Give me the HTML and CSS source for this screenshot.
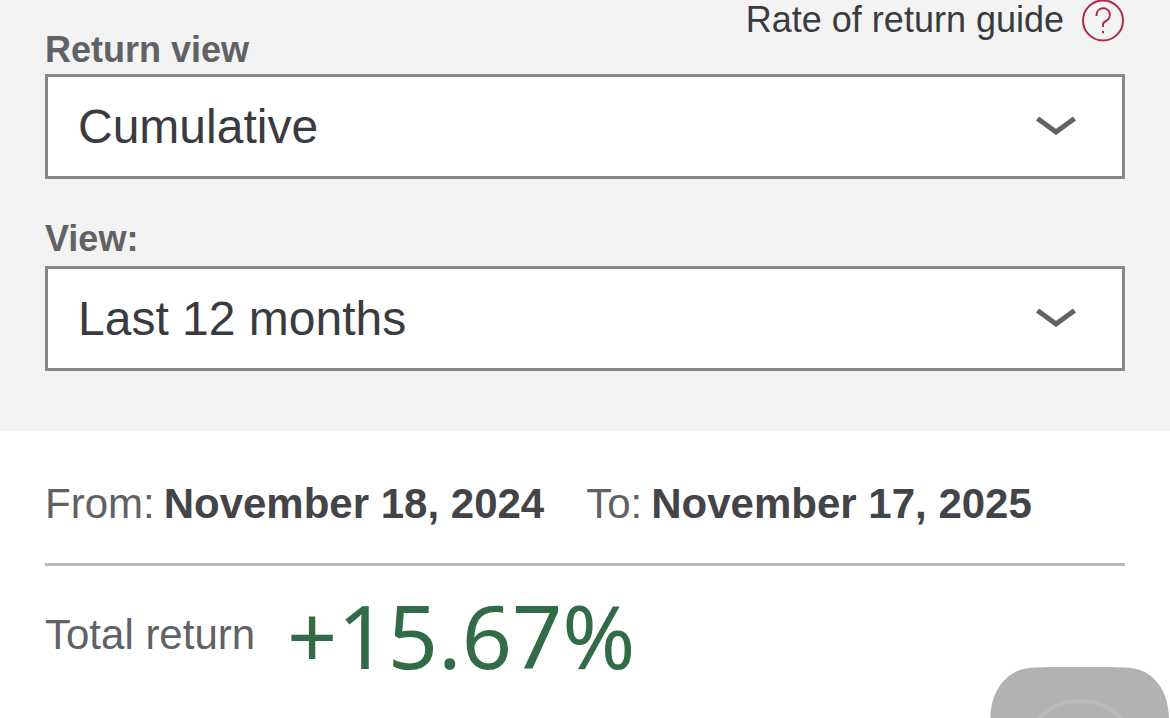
FILE: index.html
```
<!DOCTYPE html>
<html lang="en">

<head>
    <meta charset="UTF-8">
    <meta name="viewport" content="width=device-width, initial-scale=1.0">
    <title>Rate of return</title>
    <link rel="stylesheet" href="styles.css">
</head>

<body>
    <form class="filters">
        <div class="filters-top">
            <label for="return-view">Return view</label>
            <a class="guide" href="#guide">
                Rate of return guide
                <svg class="help" viewBox="0 0 42 42" aria-hidden="true">
                    <circle cx="21" cy="20.500" r="20" />
                    <path d="M14.500 16v-1a6.700 6.700 0 1 1 9.500 6c-2 .9-3 1.800-3 3.500v2.500" />
                    <path d="M21 31v2.200" />
                </svg>
            </a>
        </div>
        <div class="select">
            <select id="return-view">
                <option>Cumulative</option>
                <option>Annualized</option>
            </select>
            <svg class="arrow" viewBox="0 0 40 18" aria-hidden="true">
                <path d="M1.500 1.500l18.500 13.500 18.500-13.500" />
            </svg>
        </div>

        <label class="view-label" for="period">View:</label>
        <div class="select">
            <select id="period">
                <option>Last 12 months</option>
                <option>Year to date</option>
            </select>
            <svg class="arrow" viewBox="0 0 40 18" aria-hidden="true">
                <path d="M1.500 1.500l18.500 13.500 18.500-13.500" />
            </svg>
        </div>
    </form>

    <main class="result">
        <div class="dates">
            <p>From: <strong>November 18, 2024</strong></p>
            <p>To: <strong>November 17, 2025</strong></p>
        </div>
        <div class="total">
            <span>Total return</span>
            <span class="percent">+15.67%</span>
        </div>
    </main>

    <!-- floating button, partly below the fold -->
    <button class="floating" type="button" aria-label="Menu">
        <svg viewBox="0 0 180 180" aria-hidden="true">
            <path class="tile" d="M0.500 52C0.500 24 16 5 36 1.500Q44 0 60 0H118Q136 0 144 1.500C164 5 179 24 179 52V180H0.500z" />
            <circle class="ring" cx="90" cy="90" r="56" />
        </svg>
    </button>
</body>

</html>
```
FILE: styles.css
```
* {
    margin: 0;
    padding: 0;
    box-sizing: border-box;
}

body {
    font-family: "Liberation Sans", Arial, sans-serif;
    font-size: 42px;
    color: #616265;
    background-color: #fff;
}

.filters {
    padding: 0 45px 60px;
    background-color: #f3f3f3;
}

.filters-top {
    display: flex;
    justify-content: space-between;
    align-items: flex-end;
    height: 74px;
    padding-bottom: 4px;
}

label {
    display: block;
    font-size: 36px;
    font-weight: bold;
    line-height: 40px;
}

.guide {
    display: flex;
    align-self: flex-start;
    gap: 18px;
    padding-right: 1px;
    font-size: 36px;
    line-height: 40px;
    color: #3a3b3e;
    text-decoration: none;
}

.help {
    width: 42px;
    height: 42px;
    fill: none;
    stroke: #b02a43;
    stroke-width: 2;
}

.view-label {
    margin-top: 40px;
    margin-bottom: 7px;
}

.select {
    position: relative;
}

.select select {
    display: block;
    width: 100%;
    height: 105px;
    padding: 0 96px 0 30px;
    border: 3px solid #878787;
    border-radius: 0;
    appearance: none;
    background-color: #fff;
    color: #3a3b3e;
    font-family: inherit;
    font-size: 48px;
}

.arrow {
    position: absolute;
    top: 43px;
    right: 49px;
    width: 40px;
    height: 18px;
    fill: none;
    stroke: #616265;
    stroke-width: 5;
    pointer-events: none;
}

.result {
    padding: 48px 45px 0;
}

.dates {
    display: flex;
    gap: 42px;
    padding-bottom: 34px;
    border-bottom: 3px solid #bababa;
    line-height: 50px;
}

.dates p {
    display: flex;
    gap: 9px;
}

.dates strong {
    color: #434447;
}

.total {
    display: flex;
    align-items: center;
    gap: 32px;
    height: 138px;
}

.percent {
    font-family: "Noto Sans", "Open Sans", sans-serif;
    font-size: 88px;
    line-height: 118px;
    color: #316c46;
}

.floating {
    position: fixed;
    right: 0;
    bottom: -129px;
    width: 180px;
    height: 180px;
    border: none;
    background: none;
}

.floating svg {
    display: block;
}

.tile {
    fill: #b2b2b2;
}

.ring {
    fill: none;
    stroke: #bababa;
    stroke-width: 4;
}
```
